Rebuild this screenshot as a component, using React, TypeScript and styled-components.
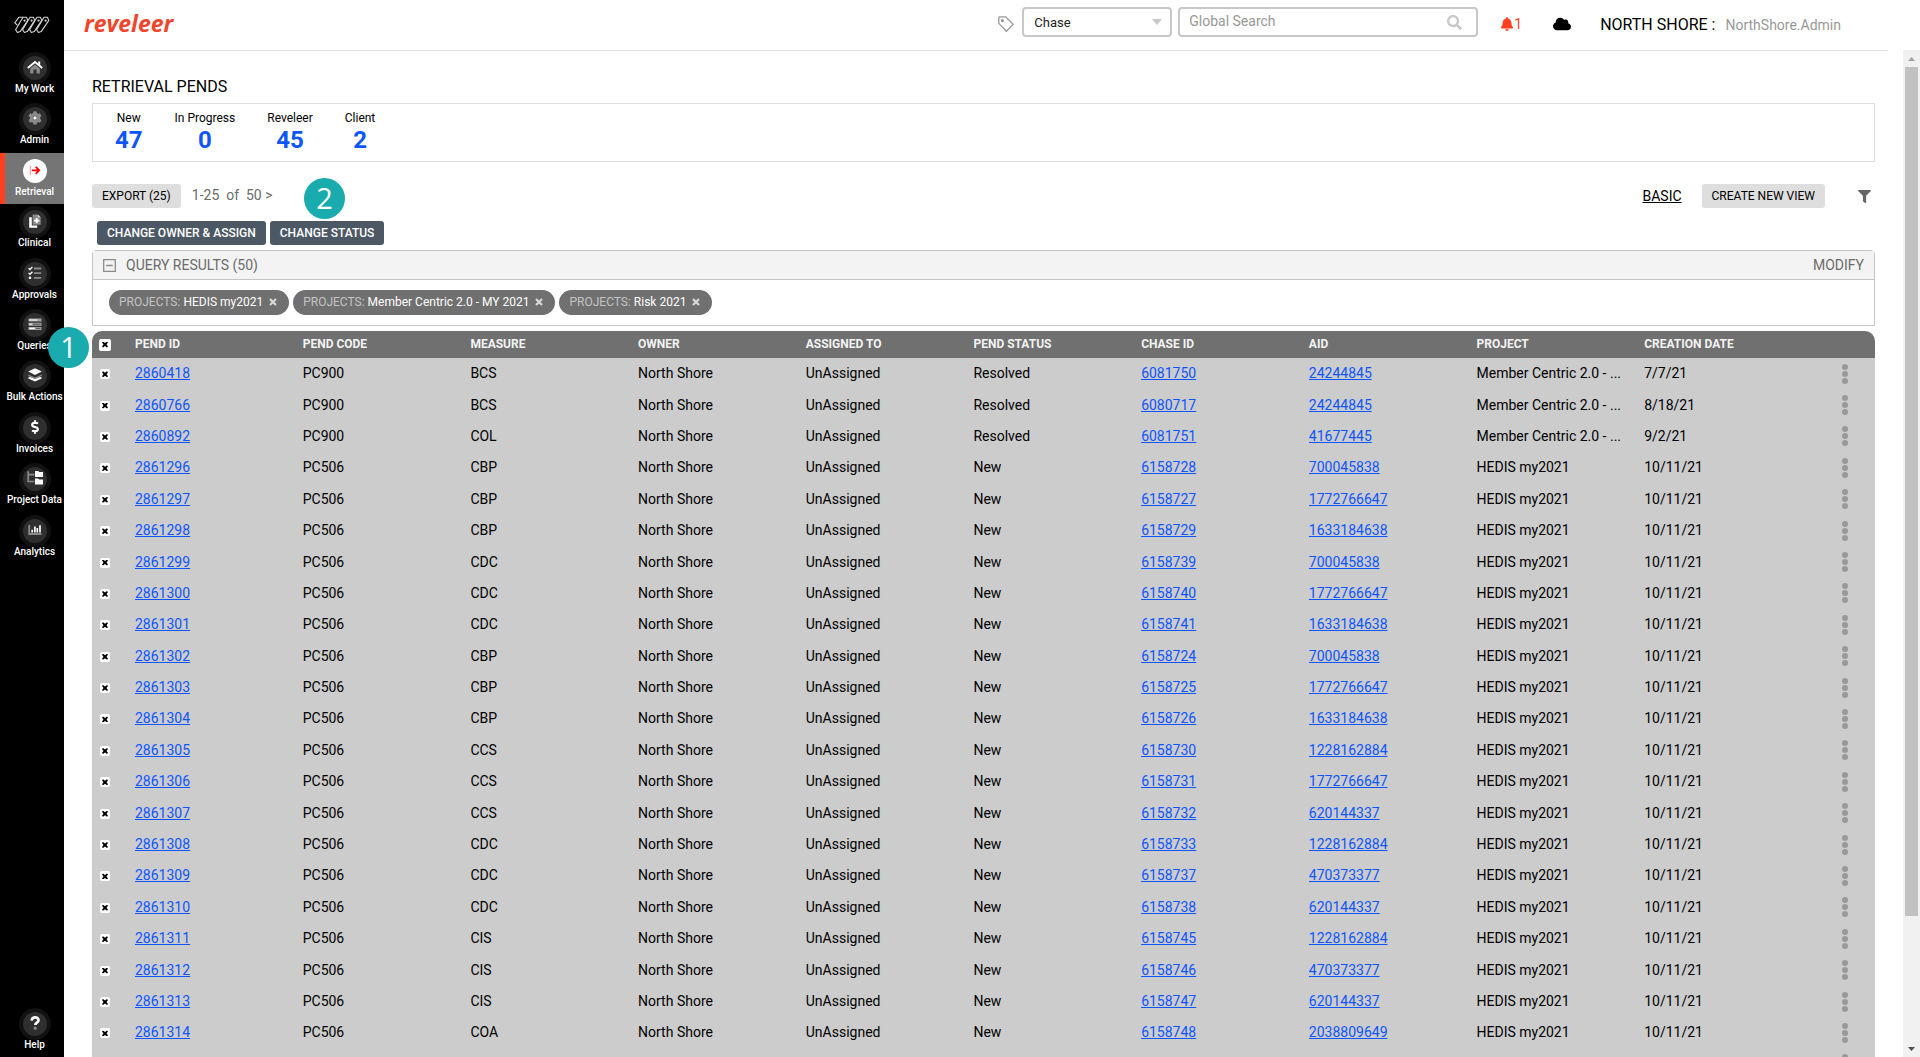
import React from "react";
import styled, { createGlobalStyle, css } from "styled-components";
import { FaBell, FaCloud, FaCog, FaDollarSign, FaFilter, FaSearch } from "react-icons/fa";

const GlobalStyle = createGlobalStyle`
  *, *::before, *::after { box-sizing: border-box; }
  body {
    margin: 0;
    background: #fff;
    color: #000;
    font-family: Roboto, "Liberation Sans", sans-serif;
    font-size: 14px;
    line-height: 16px;
  }
  button, input, select { font-family: inherit; }
`;

/* ---------- page frame ---------- */

const Shell = styled.div`
  display: flex;
  height: 100vh;
  overflow: hidden;
`;

const Sidebar = styled.nav`
  flex: 0 0 64px;
  display: flex;
  flex-direction: column;
  justify-content: space-between;
  background: #000;
`;

const SidebarTop = styled.div`
  display: flex;
  flex-direction: column;
`;

const LogoMark = styled.div`
  display: flex;
  justify-content: center;
  height: 50px;
  padding-top: 16px;
`;

const NavList = styled.div`
  display: grid;
  grid-auto-rows: 1fr;
  height: 514px;
`;

const NavItem = styled.a<{ $active?: boolean }>`
  display: flex;
  flex-direction: column;
  align-items: center;
  min-height: 51px;
  padding-top: 2px;
  border-left: 5px solid ${(p) => (p.$active ? "#ff3f20" : "transparent")};
  background: ${(p) => (p.$active ? "#757575" : "transparent")};
  color: #fff;
  font-size: 10px;
  font-weight: 500;
  line-height: 10px;
  text-decoration: none;
  white-space: nowrap;
`;

const NavDisc = styled.span<{ $active?: boolean }>`
  display: flex;
  align-items: center;
  justify-content: center;
  width: 32px;
  height: 32px;
  border-radius: 50%;
  border: 4px solid #111;
  background: #2f2f2f;
  ${(p) =>
    p.$active &&
    css`
      border-color: transparent;
      background: #fff;
      background-clip: padding-box;
    `}
`;

const Body = styled.div`
  flex: 1;
  min-width: 0;
  display: flex;
  flex-direction: column;
`;

/* ---------- header ---------- */

const Header = styled.header`
  flex: 0 0 51px;
  display: flex;
  align-items: center;
  justify-content: space-between;
  margin-right: 32px;
  padding: 0 47px 6px 20px;
  border-bottom: 1px solid #dedede;
`;

const Wordmark = styled.span`
  padding-top: 2px;
  color: #f0452c;
  font-family: "Open Sans", sans-serif;
  font-size: 23px;
  font-style: italic;
  font-weight: 700;
  line-height: 28px;
`;

const HeaderTools = styled.div`
  display: flex;
  align-items: center;
`;

const TagIcon = styled.svg`
  margin-top: 4px;
`;

const SelectBox = styled.label`
  position: relative;
  display: flex;
  margin: 0 6px 0 8px;
`;

const Select = styled.select`
  width: 150px;
  height: 30px;
  padding: 0 10px;
  border: 2px solid #c8c8c8;
  border-radius: 4px;
  background: #fff;
  color: #222;
  font-size: 13px;
  appearance: none;
`;

const Caret = styled.svg`
  position: absolute;
  right: 10px;
  top: 12px;
  pointer-events: none;
`;

const SearchBox = styled.label`
  display: flex;
  align-items: center;
  width: 300px;
  height: 30px;
  padding: 0 14px 0 9px;
  border: 2px solid #c8c8c8;
  border-radius: 4px;
  color: #c8c8c8;
`;

const SearchInput = styled.input`
  flex: 1;
  min-width: 0;
  padding: 0 0 2px;
  border: 0;
  outline: 0;
  background: none;
  font-size: 14px;
  &::placeholder {
    color: #999;
    opacity: 1;
  }
`;

const IconButton = styled.button`
  display: inline-flex;
  align-items: center;
  padding: 0;
  border: 0;
  background: none;
  color: inherit;
  cursor: pointer;
`;

const HeaderButton = styled(IconButton)`
  margin: 4px 0 0;
`;

const Alerts = styled(HeaderButton)`
  margin: 4px 31px 0 22px;
  color: #ff3f20;
  font-size: 14px;
`;

const Account = styled.div`
  display: flex;
  align-items: baseline;
  margin-left: 29px;
  padding-top: 5px;
  font-size: 16px;
  line-height: 20px;
`;

const UserName = styled.span`
  margin-left: 10px;
  color: #999;
  font-size: 14px;
`;

/* ---------- scrolling area ---------- */

const ScrollArea = styled.div`
  flex: 1;
  min-height: 0;
  display: flex;
  margin-top: -1px;
`;

const Main = styled.main`
  flex: 1;
  min-width: 0;
  overflow: hidden;
  padding: 27px 28px 0;
`;

const Track = styled.div`
  flex: 0 0 17px;
  display: grid;
  grid-template-rows: 17px 849fr 124fr 17px;
  justify-items: center;
  align-items: center;
  background: #f1f1f1;
`;

const Thumb = styled.div`
  width: 13px;
  height: 100%;
  background: #c1c1c1;
`;

const PageTitle = styled.h1`
  margin: 0 0 6px;
  font-size: 16px;
  font-weight: 400;
  line-height: 20px;
`;

const Stats = styled.section`
  display: flex;
  gap: 32px;
  height: 59px;
  padding: 6px 22px;
  border: 1px solid #dedede;
`;

const Stat = styled.div`
  display: flex;
  flex-direction: column;
  align-items: center;
  font-size: 12px;
  line-height: 16px;
`;

const StatValue = styled.a`
  color: #0d55ff;
  font-size: 24px;
  font-weight: 700;
  line-height: 28px;
  text-decoration: none;
`;

const Toolbar = styled.div`
  display: flex;
  align-items: center;
  justify-content: space-between;
  margin-top: 22px;
`;

const ToolGroup = styled.div`
  display: flex;
  align-items: center;
`;

const Button = styled.button<{ $dark?: boolean }>`
  height: 24px;
  padding: 0 10px;
  border: 0;
  border-radius: 3px;
  background: ${(p) => (p.$dark ? "#4c5965" : "#dedede")};
  color: ${(p) => (p.$dark ? "#fff" : "#000")};
  font-size: 12px;
  font-weight: ${(p) => (p.$dark ? 500 : 400)};
  line-height: 24px;
  cursor: pointer;
`;

const Pager = styled.span`
  margin-left: 11px;
  padding-bottom: 2px;
  color: #6b6b6b;
  white-space: pre;
`;

const BasicLink = styled.a`
  margin-right: 20px;
  color: #000;
`;

const FilterButton = styled(IconButton)`
  margin: 0 4px 0 33px;
  color: #666;
`;

const BulkButtons = styled.div`
  display: flex;
  gap: 4px;
  margin: 13px 5px 5px;
`;

const QueryPanel = styled.section`
  border: 1px solid #c4c4c4;
  border-radius: 4px 4px 0 0;
`;

const QueryHead = styled.div`
  display: flex;
  align-items: center;
  justify-content: space-between;
  height: 29px;
  padding: 0 10px;
  border-bottom: 1px solid #c4c4c4;
  background: #f3f3f3;
  color: #6b6b6b;
`;

const QueryTitle = styled.h2`
  margin: 0 0 0 10px;
  font-size: 14px;
  font-weight: 400;
`;

const Modify = styled(IconButton)`
  font-size: 14px;
`;

const Chips = styled.div`
  display: flex;
  gap: 4px;
  padding: 10px 16px;
`;

const Chip = styled.span`
  display: inline-flex;
  align-items: center;
  height: 25px;
  padding: 0 12px 2px 10px;
  border-radius: 13px;
  background: #707070;
  color: #fff;
  font-size: 12px;
  white-space: pre;
`;

const ChipLabel = styled.span`
  color: #c4c4c4;
`;

const ChipClose = styled(IconButton)`
  margin-left: 6px;
`;

/* ---------- table ---------- */

const Table = styled.table`
  width: 100%;
  height: 749px;
  margin-top: 5px;
  border-spacing: 0;
  table-layout: fixed;
`;

const Th = styled.th<{ $width?: number }>`
  width: ${(p) => (p.$width ? `${p.$width}px` : "auto")};
  height: 27px;
  padding: 0 20px 2px 0;
  background: #707070;
  color: #f3f3f3;
  font-size: 12px;
  font-weight: 700;
  text-align: left;
  white-space: nowrap;
  &:first-child {
    padding: 0 0 0 7px;
    border-top-left-radius: 10px;
  }
  &:last-child {
    border-top-right-radius: 10px;
  }
`;

const Td = styled.td`
  padding: 0 20px 1px 0;
  overflow: hidden;
  background: #ccc;
  font-size: 14px;
  text-overflow: ellipsis;
  white-space: nowrap;
  &:first-child {
    padding: 1px 0 0 8px;
  }
  &:last-child {
    padding: 0 0 0 30px;
  }
`;

const RecordLink = styled.a`
  color: #0d55ff;
`;

const Tick = styled.input<{ $size: number }>`
  appearance: none;
  display: grid;
  place-items: center;
  width: ${(p) => p.$size}px;
  height: ${(p) => p.$size}px;
  margin: 0;
  border-radius: 2px;
  background: #fff;
  &:checked::before {
    content: "";
    width: 6px;
    height: 6px;
    background: #000;
    clip-path: polygon(0 17%, 17% 0, 50% 25%, 83% 0, 100% 17%, 75% 50%, 100% 83%, 83% 100%, 50% 75%, 17% 100%, 0 83%, 25% 50%);
  }
`;

const DotsButton = styled(IconButton)`
  display: flex;
`;

/* numbered walkthrough markers floating over the page */
const Marker = styled.span<{ $left: number; $top: number }>`
  position: absolute;
  z-index: 2;
  left: ${(p) => p.$left}px;
  top: ${(p) => p.$top}px;
  width: 41px;
  height: 41px;
  border-radius: 50%;
  background: #19abad;
  color: #fff;
  font-family: "Open Sans", sans-serif;
  font-size: 29px;
  line-height: 40px;
  text-align: center;
`;

/* ---------- drawings ---------- */

const W = "#fff";
const G = "#8a8a8a";

const Glyph = ({ children }: { children: React.ReactNode }) => (
  <svg width="16" height="16" viewBox="0 0 16 16" fill="none" aria-hidden="true">
    {children}
  </svg>
);

const HomeIcon = () => (
  <Glyph>
    <path d="M3.2 8.6 8 4.6l4.8 4v4.9H9.6V9.6H6.4v3.9H3.2z" fill={G} />
    <path d="M.8 7.9 8 1.9l7.2 6" stroke={W} strokeWidth="1.9" />
    <path d="M11.2 1.4h2v4l-2-1.7z" fill={W} />
  </Glyph>
);
const AdminIcon = () => (
  <Glyph>
    <FaCog x={1} y={0} size={14} color={G} />
    <circle cx="8" cy="7" r="1.8" fill={W} />
  </Glyph>
);
const RetrievalIcon = () => (
  <Glyph>
    <path d="M3.3 2.5v9.5" stroke="#ff8a8a" />
    <path d="M4.8 7.3H12M8.7 3.8l3.5 3.5-3.5 3.5" stroke="#f00" strokeWidth="1.8" />
  </Glyph>
);
const ClinicalIcon = () => (
  <Glyph>
    <path d="M2.2 3.3h2.6v8.2h5.4v2.3h-8z" fill={W} />
    <path d="M5.6.4h5.2l2.9 2.8v7.6H5.6z" fill={G} />
    <path d="M10.8.4v2.8h2.9z" fill="#d0d0d0" />
    <path d="M9.7 4v5.2M7.1 6.6h5.2" stroke={W} strokeWidth="1.8" />
  </Glyph>
);
const ApprovalsIcon = () => (
  <Glyph>
    <path d="M1.6 2.2 3 3.5l2.4-2.6M1.6 7 3 8.3l2.4-2.6" stroke={W} strokeWidth="1.3" />
    <circle cx="3" cy="11.8" r="1.3" fill={W} />
    <path d="M6.8 2.5h7.4M6.8 7.1h7.4M6.8 11.8h7.4" stroke={G} strokeWidth="1.8" />
  </Glyph>
);
const QueriesIcon = () => (
  <Glyph>
    <path d="M1.5 1.5h13v3h-13zM1.5 5.7h13v3h-13zM1.5 9.9h13v3h-13z" fill="#a4a4a4" />
    <path d="M2.3 3h8M2.3 7.2h2.5M2.3 11.4h5.5" stroke={W} strokeWidth="1.1" />
    <path d="M6 7.2h7.4M9 11.4h4.4" stroke="#555" />
  </Glyph>
);
const BulkIcon = () => (
  <Glyph>
    <path d="M1.3 6.6 8 9.6l6.7-3v1.5L8 11 1.3 8.1z" fill={G} />
    <path d="m8 .2 6.8 3.4L8 7 1.2 3.6z" fill={W} />
    <path d="m1.3 9.6 1.8-.7L8 11l4.9-2.1 1.8.7v.8L8 13.6l-6.7-3.2z" fill={W} />
  </Glyph>
);
const InvoiceIcon = () => (
  <Glyph>
    <FaDollarSign x={1} y={0} size={14} color={W} />
  </Glyph>
);
const DataIcon = () => (
  <Glyph>
    <path d="M1.2.3v10.2h6.3M1.2 3.6h6.3" stroke={G} strokeWidth="1.7" />
    <path d="M8 0h3.2l1 1.1H16v5H8zM8 7.4h3.2l1 1.1H16v5H8z" fill={W} />
  </Glyph>
);
const AnalyticsIcon = () => (
  <Glyph>
    <path d="M2.2 2v9h12.3" stroke={G} strokeWidth="1.8" />
    <path d="M5.2 9.5V6.8M7.9 9.5V3.4M10.3 9.5V5M13 9.5V2.2" stroke={W} strokeWidth="1.7" />
  </Glyph>
);
const HelpIcon = () => (
  <Glyph>
    <path d="M4.6 4.6C5 2.2 6.3 1.4 8.1 1.4c2 0 3.5 1 3.5 2.9 0 2.4-3.3 2.3-3.3 4.6" stroke={W} strokeWidth="2.6" />
    <circle cx="8.2" cy="12.2" r="1.6" fill={G} />
  </Glyph>
);

const Weave = () => (
  <svg width="36" height="18" viewBox="0 0 36 18" fill="none" stroke="#d4d4d4" strokeWidth="1.1" strokeLinejoin="round" aria-hidden="true">
    {[1, 8, 15, 22].map((x) => (
      <g key={x}>
        <path d={`M${x + 8} 1.2h3.4l1.4 3.2-7.6 11.2-2.8.9-1.8-2.8z`} />
        <circle cx={x + 9.6} cy="4.6" r=".6" />
      </g>
    ))}
    <path d="m3.6 9.4-2.8-2.6L5 1.2h4" />
  </svg>
);

const Cross = () => (
  <svg width="8" height="8" viewBox="0 0 8 8" stroke="#d8d8d8" strokeWidth="2.2" aria-hidden="true">
    <path d="m1 1 6 6M7 1 1 7" />
  </svg>
);

/* ---------- data ---------- */

const NAV = [
  { label: "My Work", icon: <HomeIcon /> },
  { label: "Admin", icon: <AdminIcon /> },
  { label: "Retrieval", icon: <RetrievalIcon />, active: true },
  { label: "Clinical", icon: <ClinicalIcon /> },
  { label: "Approvals", icon: <ApprovalsIcon /> },
  { label: "Queries", icon: <QueriesIcon /> },
  { label: "Bulk Actions", icon: <BulkIcon /> },
  { label: "Invoices", icon: <InvoiceIcon /> },
  { label: "Project Data", icon: <DataIcon /> },
  { label: "Analytics", icon: <AnalyticsIcon /> },
];

const STATS: [string, number][] = [
  ["New", 47],
  ["In Progress", 0],
  ["Reveleer", 45],
  ["Client", 2],
];

const CHIPS = ["HEDIS my2021", "Member Centric 2.0 - MY 2021", "Risk 2021"];

const COLUMNS = ["PEND ID", "PEND CODE", "MEASURE", "OWNER", "ASSIGNED TO", "PEND STATUS", "CHASE ID", "AID", "PROJECT", "CREATION DATE"];

const MC = "Member Centric 2.0 - ...";
const HD = "HEDIS my2021";

type Row = [string, string, string, string, string, string, string, string];
const ROWS: Row[] = [
  ["2860418", "PC900", "BCS", "Resolved", "6081750", "24244845", MC, "7/7/21"],
  ["2860766", "PC900", "BCS", "Resolved", "6080717", "24244845", MC, "8/18/21"],
  ["2860892", "PC900", "COL", "Resolved", "6081751", "41677445", MC, "9/2/21"],
  ["2861296", "PC506", "CBP", "New", "6158728", "700045838", HD, "10/11/21"],
  ["2861297", "PC506", "CBP", "New", "6158727", "1772766647", HD, "10/11/21"],
  ["2861298", "PC506", "CBP", "New", "6158729", "1633184638", HD, "10/11/21"],
  ["2861299", "PC506", "CDC", "New", "6158739", "700045838", HD, "10/11/21"],
  ["2861300", "PC506", "CDC", "New", "6158740", "1772766647", HD, "10/11/21"],
  ["2861301", "PC506", "CDC", "New", "6158741", "1633184638", HD, "10/11/21"],
  ["2861302", "PC506", "CBP", "New", "6158724", "700045838", HD, "10/11/21"],
  ["2861303", "PC506", "CBP", "New", "6158725", "1772766647", HD, "10/11/21"],
  ["2861304", "PC506", "CBP", "New", "6158726", "1633184638", HD, "10/11/21"],
  ["2861305", "PC506", "CCS", "New", "6158730", "1228162884", HD, "10/11/21"],
  ["2861306", "PC506", "CCS", "New", "6158731", "1772766647", HD, "10/11/21"],
  ["2861307", "PC506", "CCS", "New", "6158732", "620144337", HD, "10/11/21"],
  ["2861308", "PC506", "CDC", "New", "6158733", "1228162884", HD, "10/11/21"],
  ["2861309", "PC506", "CDC", "New", "6158737", "470373377", HD, "10/11/21"],
  ["2861310", "PC506", "CDC", "New", "6158738", "620144337", HD, "10/11/21"],
  ["2861311", "PC506", "CIS", "New", "6158745", "1228162884", HD, "10/11/21"],
  ["2861312", "PC506", "CIS", "New", "6158746", "470373377", HD, "10/11/21"],
  ["2861313", "PC506", "CIS", "New", "6158747", "620144337", HD, "10/11/21"],
  ["2861314", "PC506", "COA", "New", "6158748", "2038809649", HD, "10/11/21"],
  ["2861315", "PC506", "COA", "New", "6158749", "2038809649", HD, "10/11/21"],
];

const NavLink = ({ label, icon, active }: { label: string; icon: React.ReactNode; active?: boolean }) => (
  <NavItem href="#" $active={active}>
    <NavDisc $active={active}>{icon}</NavDisc>
    {label}
  </NavItem>
);

export default function App() {
  return (
    <>
      <GlobalStyle />
      <Shell>
        <Sidebar>
          <SidebarTop>
            <LogoMark>
              <Weave />
            </LogoMark>
            <NavList>
              {NAV.map((n) => (
                <NavLink key={n.label} {...n} />
              ))}
            </NavList>
          </SidebarTop>
          <NavLink label="Help" icon={<HelpIcon />} />
        </Sidebar>

        <Body>
          <Header>
            <Wordmark>reveleer</Wordmark>
            <HeaderTools>
              <TagIcon width="16" height="16" viewBox="0 0 16 16" fill="none" stroke="#999" strokeWidth="1.3" strokeLinejoin="round" aria-hidden="true">
                <path d="M.8 1.4v6l7.6 7.8 6.8-6.8L7.6.8H1.4z" />
                <circle cx="4.4" cy="4.6" r=".9" fill="#999" />
              </TagIcon>
              <SelectBox>
                <Select aria-label="Search type" defaultValue="Chase">
                  <option>Chase</option>
                </Select>
                <Caret width="10" height="6" viewBox="0 0 10 6" aria-hidden="true">
                  <path d="M0 0h10L5 6z" fill="#c8c8c8" />
                </Caret>
              </SelectBox>
              <SearchBox>
                <SearchInput type="search" aria-label="Global Search" placeholder="Global Search" />
                <FaSearch size={15} aria-hidden="true" />
              </SearchBox>
              <Alerts aria-label="1 notification">
                <FaBell size={14} aria-hidden="true" />1
              </Alerts>
              <HeaderButton aria-label="Downloads">
                <FaCloud size={18} aria-hidden="true" />
              </HeaderButton>
              <Account>
                NORTH SHORE : <UserName>NorthShore.Admin</UserName>
              </Account>
            </HeaderTools>
          </Header>

          <ScrollArea>
            <Main>
              <PageTitle>RETRIEVAL PENDS</PageTitle>
              <Stats>
                {STATS.map(([label, value]) => (
                  <Stat key={label}>
                    {label}
                    <StatValue href="#">{value}</StatValue>
                  </Stat>
                ))}
              </Stats>

              <Toolbar>
                <ToolGroup>
                  <Button>EXPORT (25)</Button>
                  <Pager>{"1-25  of  50 >"}</Pager>
                </ToolGroup>
                <ToolGroup>
                  <BasicLink href="#">BASIC</BasicLink>
                  <Button>CREATE NEW VIEW</Button>
                  <FilterButton aria-label="Filter">
                    <FaFilter size={13} aria-hidden="true" />
                  </FilterButton>
                </ToolGroup>
              </Toolbar>

              <BulkButtons>
                <Button $dark>CHANGE OWNER &amp; ASSIGN</Button>
                <Button $dark>CHANGE STATUS</Button>
              </BulkButtons>

              <QueryPanel>
                <QueryHead>
                  <ToolGroup>
                    <IconButton aria-label="Collapse">
                      <svg width="13" height="13" viewBox="0 0 13 13" fill="none" stroke="#8c8c8c" strokeWidth="1.3" aria-hidden="true">
                        <path d="M.7.7h11.6v11.6H.7zM3.2 6.5h6.6" />
                      </svg>
                    </IconButton>
                    <QueryTitle>QUERY RESULTS (50)</QueryTitle>
                  </ToolGroup>
                  <Modify>MODIFY</Modify>
                </QueryHead>
                <Chips>
                  {CHIPS.map((c) => (
                    <Chip key={c}>
                      <ChipLabel>PROJECTS: </ChipLabel>
                      {c}
                      <ChipClose aria-label={`Remove ${c}`}>
                        <Cross />
                      </ChipClose>
                    </Chip>
                  ))}
                </Chips>
              </QueryPanel>

              <Table>
                <thead>
                  <tr>
                    <Th $width={43}>
                      <Tick type="checkbox" $size={12} defaultChecked aria-label="Select all" />
                    </Th>
                    {COLUMNS.map((c) => (
                      <Th key={c}>{c}</Th>
                    ))}
                    <Th $width={63} />
                  </tr>
                </thead>
                <tbody>
                  {ROWS.map(([id, code, measure, status, chase, aid, project, date]) => (
                    <tr key={id}>
                      <Td>
                        <Tick type="checkbox" $size={10} defaultChecked aria-label={`Select ${id}`} />
                      </Td>
                      <Td>
                        <RecordLink href="#">{id}</RecordLink>
                      </Td>
                      <Td>{code}</Td>
                      <Td>{measure}</Td>
                      <Td>North Shore</Td>
                      <Td>UnAssigned</Td>
                      <Td>{status}</Td>
                      <Td>
                        <RecordLink href="#">{chase}</RecordLink>
                      </Td>
                      <Td>
                        <RecordLink href="#">{aid}</RecordLink>
                      </Td>
                      <Td>{project}</Td>
                      <Td>{date}</Td>
                      <Td>
                        <DotsButton aria-label={`Actions for ${id}`}>
                          <svg width="6" height="20" viewBox="0 0 6 20" fill="#999" aria-hidden="true">
                            <circle cx="3" cy="3" r="3" />
                            <circle cx="3" cy="10" r="3" />
                            <circle cx="3" cy="17" r="3" />
                          </svg>
                        </DotsButton>
                      </Td>
                    </tr>
                  ))}
                </tbody>
              </Table>
            </Main>
            <Track aria-hidden="true">
              <svg width="7" height="4" viewBox="0 0 7 4">
                <path d="M0 4h7L3.5 0z" fill="#a3a3a3" />
              </svg>
              <Thumb />
              <span />
              <svg width="7" height="4" viewBox="0 0 7 4">
                <path d="M0 0h7L3.5 4z" fill="#505050" />
              </svg>
            </Track>
          </ScrollArea>
        </Body>
      </Shell>
      <Marker $left={48} $top={327}>1</Marker>
      <Marker $left={304} $top={178}>2</Marker>
    </>
  );
}
